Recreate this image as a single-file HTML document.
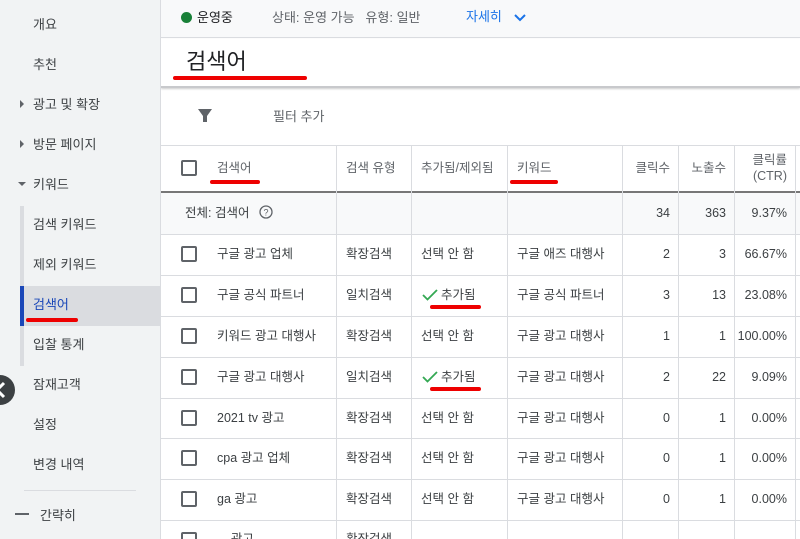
<!DOCTYPE html>
<html><head><meta charset="utf-8"><style>
*{margin:0;padding:0;box-sizing:border-box}
html,body{width:800px;height:539px;overflow:hidden}
body{font-family:"Liberation Sans","Noto Sans CJK KR",sans-serif;color:#3c4043;font-size:13px;position:relative;background:#fff}
.side{position:absolute;left:0;top:0;width:161px;height:539px;background:#f1f3f4;border-right:1px solid #dadce0}
.si{position:absolute;left:33px;font-size:13px;color:#3c4043;line-height:16px;height:16px}
.ar{position:absolute;left:20px;width:0;height:0}
.main{position:absolute;left:161px;top:0;right:0;height:539px;overflow:hidden}
.abs{position:absolute}
.cb{position:absolute;left:20px;width:16px;height:16px;border:2px solid #5f6368;border-radius:2px}
.red{position:absolute;height:4px;background:#e00;border-radius:2px}
.vl{position:absolute;top:145px;bottom:0;width:1px;background:#dadce0}
.hl{position:absolute;left:0;right:0;height:1px;background:#dadce0}
.t{position:absolute;font-size:12.5px;color:#3c4043;white-space:nowrap;line-height:16px;height:16px}
.r{text-align:right}
</style></head><body>
<div class="side">
<div class="si" style="top:17px">개요</div>
<div class="si" style="top:57px">추천</div>
<div class="ar" style="top:100px;border-left:4px solid #5f6368;border-top:4px solid transparent;border-bottom:4px solid transparent"></div>
<div class="si" style="top:97px">광고 및 확장</div>
<div class="ar" style="top:140px;border-left:4px solid #5f6368;border-top:4px solid transparent;border-bottom:4px solid transparent"></div>
<div class="si" style="top:137px">방문 페이지</div>
<div class="ar" style="top:182px;left:18px;border-top:4px solid #5f6368;border-left:4px solid transparent;border-right:4px solid transparent"></div>
<div class="si" style="top:177px">키워드</div>
<div class="abs" style="left:20px;top:206px;width:4px;height:160px;background:#dadce0"></div>
<div class="abs" style="left:20px;top:286px;width:140px;height:40px;background:#dadce0"></div>
<div class="abs" style="left:20px;top:286px;width:4px;height:40px;background:#1a47b8"></div>
<div class="si" style="top:217px">검색 키워드</div>
<div class="si" style="top:257px">제외 키워드</div>
<div class="si" style="top:297px;color:#1a47b8">검색어</div>
<div class="red" style="left:26px;top:318px;width:52px"></div>
<div class="si" style="top:337px">입찰 통계</div>
<div class="si" style="top:377px">잠재고객</div>
<div class="si" style="top:417px">설정</div>
<div class="si" style="top:457px">변경 내역</div>
<div class="abs" style="left:24px;top:490px;width:112px;height:1px;background:#dadce0"></div>
<div class="abs" style="left:15px;top:513px;width:14px;height:2px;background:#5f6368"></div>
<div class="si" style="top:508px;left:40px">간략히</div>
<svg class="abs" style="left:-15px;top:375px" width="30" height="30"><circle cx="15" cy="15" r="15" fill="#3c4043"/><path d="M19 8 L12 15 L19 22" stroke="#fff" stroke-width="3" fill="none"/></svg>
</div>
<div class="main">
<div class="abs" style="left:0;top:0;right:0;height:38px;background:#f8f9fa;border-bottom:1px solid #dadce0"></div>
<div class="abs" style="left:20px;top:12px;width:11px;height:11px;border-radius:50%;background:#188038"></div>
<div class="t" style="left:36px;top:10px;font-size:13px;color:#202124">운영중</div>
<div class="t" style="left:111px;top:10px;font-size:13px;color:#5f6368">상태: 운영 가능&nbsp;&nbsp; 유형: 일반</div>
<div class="t" style="left:305px;top:9px;font-size:13px;color:#1a73e8">자세히</div>
<svg class="abs" style="left:352px;top:12px" width="14" height="12"><path d="M2 3 L7 8 L12 3" stroke="#1a73e8" stroke-width="2" fill="none"/></svg>
<div class="abs" style="left:0;top:39px;right:0;height:49px;background:#fff;border-bottom:2px solid #c8c9cc;box-shadow:0 1px 2px rgba(0,0,0,.2)"></div>
<div class="t" style="left:25px;top:48px;font-size:22px;color:#202124;line-height:28px;height:28px">검색어</div>
<div class="red" style="left:12px;top:76px;width:134px"></div>
<svg class="abs" style="left:36px;top:108px" width="16" height="16"><path d="M1 1 H15 L10 8 V14 L6 14 V8 Z" fill="#5f6368"/></svg>
<div class="t" style="left:112px;top:109px;font-size:13px;color:#5f6368">필터 추가</div>
<div class="hl" style="top:145px"></div>
<div class="hl" style="top:191px;height:2px;background:#777"></div>
<div class="abs" style="left:0;right:0;top:193px;height:41px;background:#f8f9fa"></div>
<div class="vl" style="left:175px"></div><div class="vl" style="left:250px"></div><div class="vl" style="left:346px"></div><div class="vl" style="left:461px"></div><div class="vl" style="left:517px"></div><div class="vl" style="left:573px"></div><div class="vl" style="left:634px"></div>
<div class="hl" style="top:234px"></div><div class="hl" style="top:275px"></div><div class="hl" style="top:316px"></div><div class="hl" style="top:357px"></div><div class="hl" style="top:398px"></div><div class="hl" style="top:438px"></div><div class="hl" style="top:479px"></div><div class="hl" style="top:520px"></div>
<div class="cb" style="top:160px"></div>
<div class="t" style="left:56px;top:160px;color:#5f6368">검색어</div>
<div class="red" style="left:49px;top:180px;width:50px"></div>
<div class="t" style="left:185px;top:160px;color:#5f6368">검색 유형</div>
<div class="t" style="left:260px;top:160px;color:#5f6368">추가됨/제외됨</div>
<div class="t" style="left:356px;top:160px;color:#5f6368">키워드</div>
<div class="red" style="left:349px;top:180px;width:48px"></div>
<div class="t r" style="left:461px;width:48px;top:160px;color:#5f6368">클릭수</div>
<div class="t r" style="left:517px;width:48px;top:160px;color:#5f6368">노출수</div>
<div class="t r" style="left:573px;width:53px;top:152px;color:#5f6368;height:32px">클릭률<br>(CTR)</div>
<div class="t" style="left:24px;top:205px">전체: 검색어</div>
<svg class="abs" style="left:98px;top:205px" width="14" height="14"><circle cx="7" cy="7" r="6" stroke="#5f6368" stroke-width="1.3" fill="none"/><text x="7" y="10.5" font-size="9" text-anchor="middle" fill="#5f6368" font-family="Liberation Sans">?</text></svg>
<div class="t r" style="left:461px;width:48px;top:205px">34</div>
<div class="t r" style="left:517px;width:48px;top:205px">363</div>
<div class="t r" style="left:573px;width:53px;top:205px">9.37%</div>

<div class="cb" style="top:246px"></div><div class="t" style="left:56px;top:246px">구글 광고 업체</div><div class="t" style="left:185px;top:246px">확장검색</div><div class="t" style="left:260px;top:246px">선택 안 함</div><div class="t" style="left:356px;top:246px">구글 애즈 대행사</div><div class="t r" style="left:461px;width:48px;top:246px">2</div><div class="t r" style="left:517px;width:48px;top:246px">3</div><div class="t r" style="left:573px;width:53px;top:246px">66.67%</div>

<div class="cb" style="top:287px"></div><div class="t" style="left:56px;top:287px">구글 공식 파트너</div><div class="t" style="left:185px;top:287px">일치검색</div><svg class="abs" style="left:261px;top:289px" width="16" height="12"><path d="M1 6 L5.5 10.5 L15 1" stroke="#34a853" stroke-width="1.8" fill="none"/></svg><div class="t" style="left:280px;top:287px">추가됨</div><div class="red" style="left:269px;top:305px;width:51px"></div><div class="t" style="left:356px;top:287px">구글 공식 파트너</div><div class="t r" style="left:461px;width:48px;top:287px">3</div><div class="t r" style="left:517px;width:48px;top:287px">13</div><div class="t r" style="left:573px;width:53px;top:287px">23.08%</div>

<div class="cb" style="top:328px"></div><div class="t" style="left:56px;top:328px">키워드 광고 대행사</div><div class="t" style="left:185px;top:328px">확장검색</div><div class="t" style="left:260px;top:328px">선택 안 함</div><div class="t" style="left:356px;top:328px">구글 광고 대행사</div><div class="t r" style="left:461px;width:48px;top:328px">1</div><div class="t r" style="left:517px;width:48px;top:328px">1</div><div class="t r" style="left:573px;width:53px;top:328px">100.00%</div>

<div class="cb" style="top:369px"></div><div class="t" style="left:56px;top:369px">구글 광고 대행사</div><div class="t" style="left:185px;top:369px">일치검색</div><svg class="abs" style="left:261px;top:371px" width="16" height="12"><path d="M1 6 L5.5 10.5 L15 1" stroke="#34a853" stroke-width="1.8" fill="none"/></svg><div class="t" style="left:280px;top:369px">추가됨</div><div class="red" style="left:269px;top:387px;width:51px"></div><div class="t" style="left:356px;top:369px">구글 광고 대행사</div><div class="t r" style="left:461px;width:48px;top:369px">2</div><div class="t r" style="left:517px;width:48px;top:369px">22</div><div class="t r" style="left:573px;width:53px;top:369px">9.09%</div>

<div class="cb" style="top:410px"></div><div class="t" style="left:56px;top:410px">2021 tv 광고</div><div class="t" style="left:185px;top:410px">확장검색</div><div class="t" style="left:260px;top:410px">선택 안 함</div><div class="t" style="left:356px;top:410px">구글 광고 대행사</div><div class="t r" style="left:461px;width:48px;top:410px">0</div><div class="t r" style="left:517px;width:48px;top:410px">1</div><div class="t r" style="left:573px;width:53px;top:410px">0.00%</div>

<div class="cb" style="top:450px"></div><div class="t" style="left:56px;top:450px">cpa 광고 업체</div><div class="t" style="left:185px;top:450px">확장검색</div><div class="t" style="left:260px;top:450px">선택 안 함</div><div class="t" style="left:356px;top:450px">구글 광고 대행사</div><div class="t r" style="left:461px;width:48px;top:450px">0</div><div class="t r" style="left:517px;width:48px;top:450px">1</div><div class="t r" style="left:573px;width:53px;top:450px">0.00%</div>

<div class="cb" style="top:491px"></div><div class="t" style="left:56px;top:491px">ga 광고</div><div class="t" style="left:185px;top:491px">확장검색</div><div class="t" style="left:260px;top:491px">선택 안 함</div><div class="t" style="left:356px;top:491px">구글 광고 대행사</div><div class="t r" style="left:461px;width:48px;top:491px">0</div><div class="t r" style="left:517px;width:48px;top:491px">1</div><div class="t r" style="left:573px;width:53px;top:491px">0.00%</div>

<div class="cb" style="top:532px"></div><div class="t" style="left:56px;top:531px">... 광고</div><div class="t" style="left:185px;top:531px">확장검색</div>
</div>
</body></html>
